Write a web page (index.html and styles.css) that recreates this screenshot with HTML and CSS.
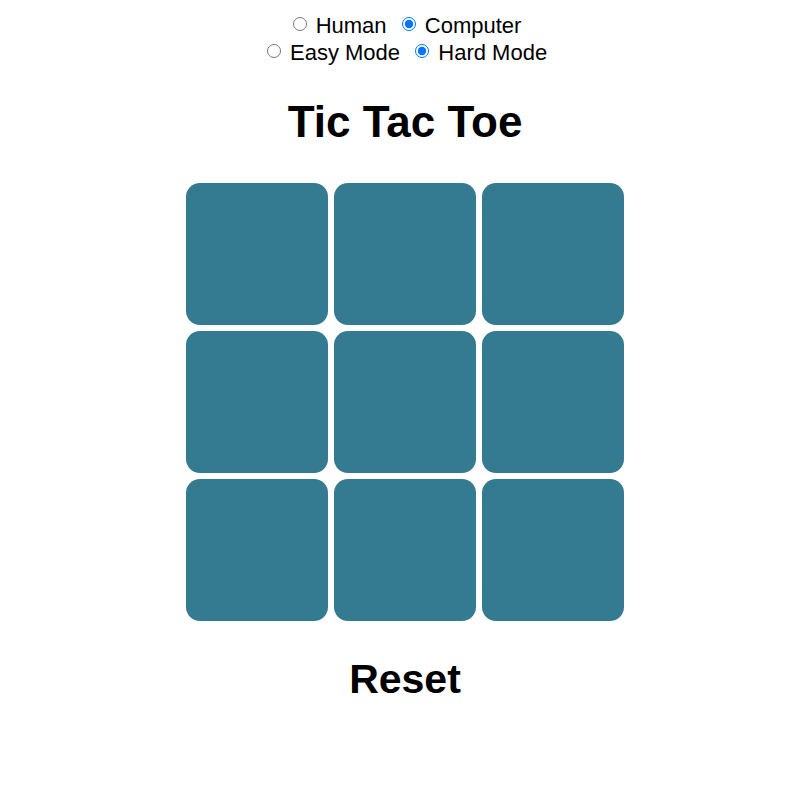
FILE: index.html
```html
<!DOCTYPE html>
<html>
<head>
<meta charset="utf-8">
<link rel="stylesheet" href="styles.css">
</head>
<body>
<div class="options">
  <div class="row"><label><input type="radio" name="opp"> Human</label> <label class="second"><input type="radio" name="opp" checked> Computer</label></div>
  <div class="row"><label><input type="radio" name="mode"> Easy Mode</label> <label class="second"><input type="radio" name="mode" checked> Hard Mode</label></div>
</div>
<h1 class="title">Tic Tac Toe</h1>
<div class="board">
  <div class="cell"></div><div class="cell"></div><div class="cell"></div>
  <div class="cell"></div><div class="cell"></div><div class="cell"></div>
  <div class="cell"></div><div class="cell"></div><div class="cell"></div>
</div>
<div class="reset">Reset</div>
</body>
</html>
```
FILE: styles.css
```css
body {
  margin: 12px 8px 8px 11px;
  font-family: "Liberation Sans", Arial, sans-serif;
  background: #fff;
  color: #000;
}
.options {
  text-align: center;
  font-size: 22px;
}
.row {
  line-height: 27px;
  height: 27px;
}
.row input {
  width: 14px;
  height: 14px;
  margin: 0 3px 0 4px;
  vertical-align: 2px;
}
.second input {
  margin-left: 9px;
}
.title {
  text-align: center;
  font-size: 44px;
  font-weight: bold;
  line-height: 49px;
  margin: 31px 0 37px;
}
.board {
  display: grid;
  grid-template-columns: repeat(3, 142px);
  grid-auto-rows: 142px;
  gap: 6px;
  justify-content: center;
}
.cell {
  background: #347b91;
  border-radius: 14px;
}
.reset {
  text-align: center;
  font-size: 41px;
  font-weight: bold;
  line-height: 47px;
  margin-top: 35px;
}
```
